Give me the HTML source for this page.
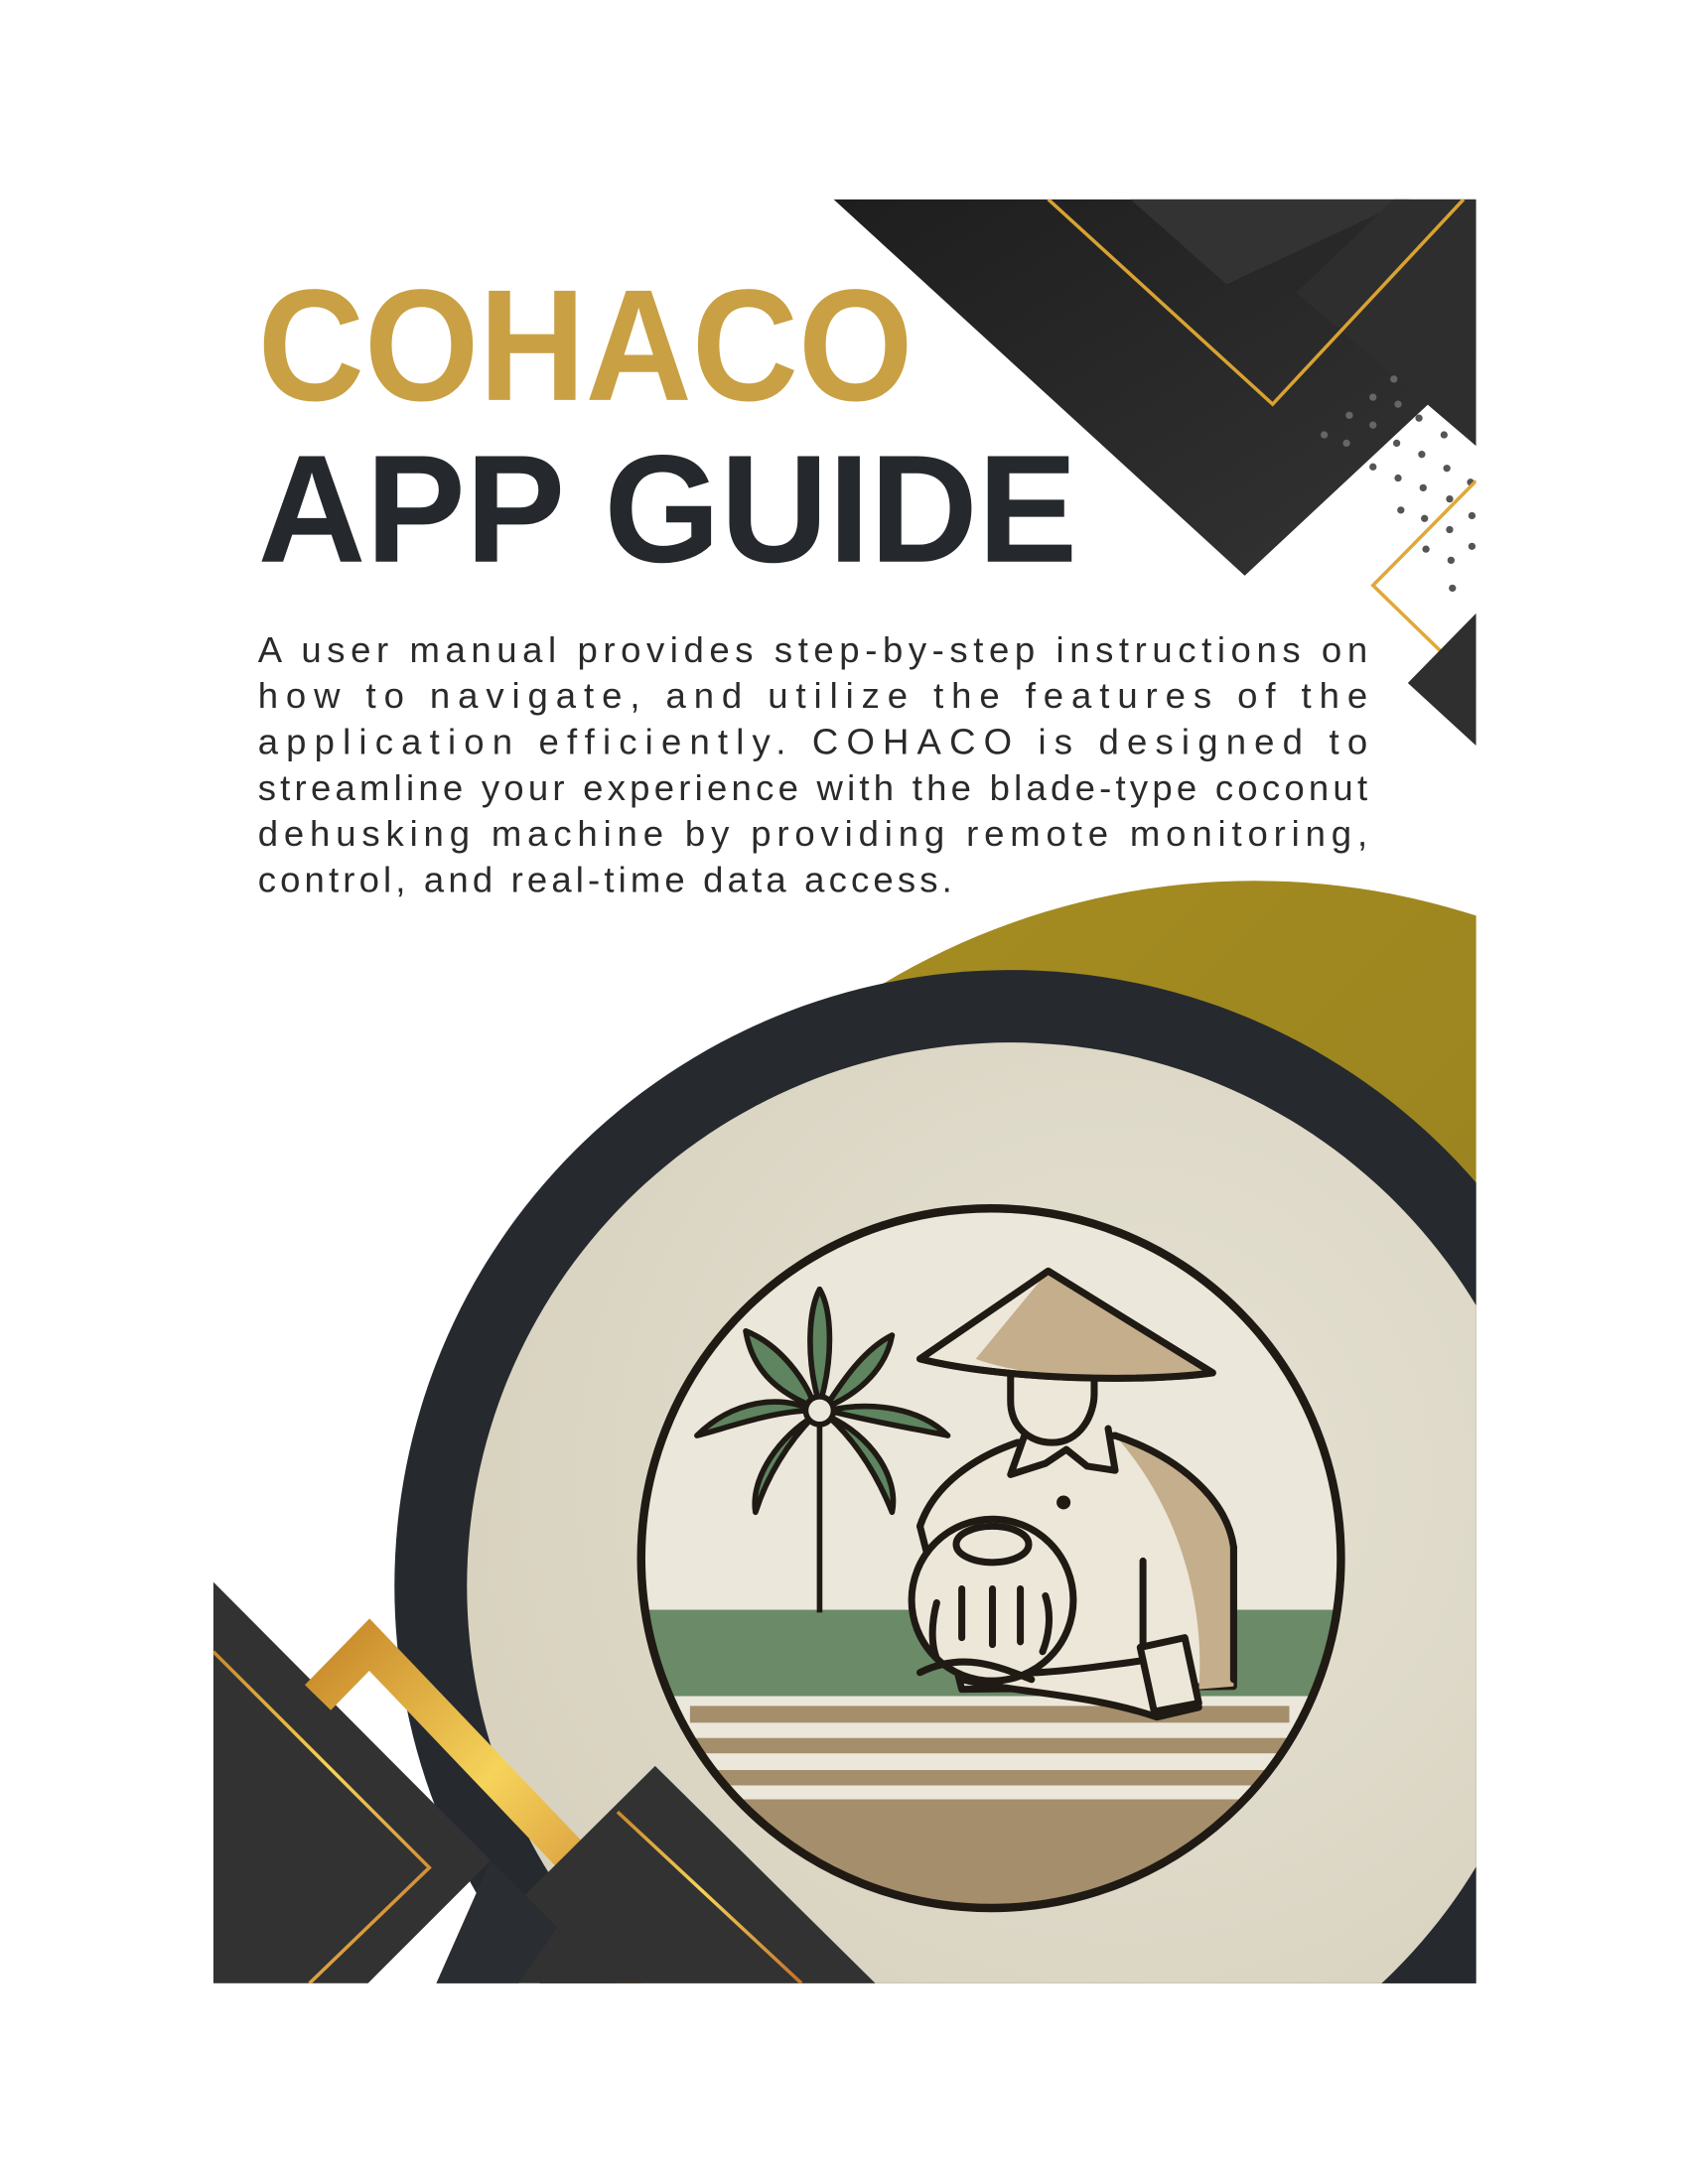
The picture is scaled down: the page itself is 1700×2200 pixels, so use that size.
<!DOCTYPE html>
<html><head><meta charset="utf-8"><style>
html,body{margin:0;padding:0;background:#fff;width:1700px;height:2200px;overflow:hidden;}
svg{display:block;}
</style></head><body>
<svg width="1700" height="2200" viewBox="0 0 1211 1567" preserveAspectRatio="none" xmlns="http://www.w3.org/2000/svg">
<defs>
<linearGradient id="dk" x1="0" y1="0" x2="1" y2="1"><stop offset="0" stop-color="#1e1e1f"/><stop offset="1" stop-color="#343434"/></linearGradient>
<linearGradient id="gl" x1="0" y1="0" x2="1" y2="1"><stop offset="0" stop-color="#c8892b"/><stop offset="0.45" stop-color="#f6d35a"/><stop offset="1" stop-color="#c3722a"/></linearGradient>
<linearGradient id="gd" x1="0" y1="0" x2="1" y2="1"><stop offset="0" stop-color="#a88f22"/><stop offset="1" stop-color="#8c771c"/></linearGradient>
<radialGradient id="bg" cx="0.6" cy="0.4" r="0.7"><stop offset="0" stop-color="#e6e2d4"/><stop offset="1" stop-color="#d6d0bc"/></radialGradient>
<clipPath id="box"><rect x="153" y="143" width="906" height="1280"/></clipPath>
<clipPath id="lc"><circle cx="711" cy="1118" r="250"/></clipPath>
</defs>

<g clip-path="url(#box)">
  <circle cx="900" cy="1150" r="518" fill="url(#gd)"/>
  <circle cx="725" cy="1138" r="442" fill="#262a2f"/>
  <circle cx="725" cy="1138" r="390" fill="url(#bg)"/>

  <polygon points="598,143 1059,143 1059,258 893,413" fill="url(#dk)"/>
  <polygon points="811,143 1011,143 880,204" fill="#333"/>
  <polygon points="930,210 1000,143 1059,143 1059,320" fill="#2e2e2e"/>
  <polyline points="752,143 913,290 1050,143" fill="none" stroke="#d9a232" stroke-width="2.5"/>
  <g fill="#666">
    <circle cx="1000" cy="272" r="2.6"/><circle cx="985" cy="285" r="2.6"/><circle cx="1003" cy="290" r="2.6"/>
    <circle cx="968" cy="298" r="2.6"/><circle cx="985" cy="305" r="2.6"/><circle cx="950" cy="312" r="2.6"/><circle cx="966" cy="318" r="2.6"/>
  </g>
  <g fill="#555">
    <circle cx="1018" cy="300" r="2.6"/><circle cx="1036" cy="312" r="2.6"/><circle cx="1002" cy="318" r="2.6"/><circle cx="1020" cy="326" r="2.6"/>
    <circle cx="1038" cy="336" r="2.6"/><circle cx="985" cy="335" r="2.6"/><circle cx="1003" cy="343" r="2.6"/><circle cx="1021" cy="350" r="2.6"/>
    <circle cx="1040" cy="358" r="2.6"/><circle cx="1055" cy="346" r="2.6"/><circle cx="1005" cy="366" r="2.6"/><circle cx="1022" cy="372" r="2.6"/>
    <circle cx="1040" cy="380" r="2.6"/><circle cx="1056" cy="370" r="2.6"/><circle cx="1023" cy="394" r="2.6"/><circle cx="1041" cy="402" r="2.6"/><circle cx="1056" cy="392" r="2.6"/><circle cx="1042" cy="422" r="2.6"/>
  </g>
  <polyline points="1059,345 985,420 1059,492" fill="none" stroke="#e0a838" stroke-width="2.5"/>
  <polygon points="1010,490 1059,440 1059,535" fill="#2f2f2f"/>

  <g clip-path="url(#lc)">
    <rect x="440" y="860" width="560" height="520" fill="#ebe7da"/>
    <rect x="440" y="1155" width="560" height="62" fill="#6a8a68"/>
    <rect x="440" y="1217" width="560" height="8" fill="#ebe7da"/>
    <rect x="495" y="1224" width="430" height="12" fill="#a48e6c"/>
    <rect x="495" y="1247" width="430" height="11" fill="#a48e6c"/>
    <rect x="495" y="1270" width="430" height="11" fill="#a48e6c"/>
    <rect x="440" y="1291" width="560" height="100" fill="#a48e6c"/>
  </g>
  <g stroke="#1f1a14" stroke-width="4" fill="#5e8460" stroke-linejoin="round">
    <line x1="588" y1="1010" x2="588" y2="1157"/>
    <path d="M588,1008 C578,975 580,940 588,925 C597,940 598,975 588,1008Z"/>
    <path d="M585,1010 C560,1000 540,985 535,955 C560,965 578,990 585,1010Z"/>
    <path d="M583,1012 C555,1012 520,1025 500,1030 C525,1005 560,1000 583,1012Z"/>
    <path d="M584,1016 C565,1035 550,1060 542,1085 C538,1060 560,1030 584,1016Z"/>
    <path d="M594,1016 C615,1035 630,1060 640,1085 C645,1060 625,1030 594,1016Z"/>
    <path d="M594,1012 C625,1005 660,1010 680,1030 C655,1025 625,1020 594,1012Z"/>
    <path d="M592,1010 C605,990 620,968 640,958 C635,985 612,1002 592,1010Z"/>
    <circle cx="588" cy="1012" r="10" fill="#ebe7da"/>
  </g>
  <g stroke="#1f1a14" stroke-width="5" stroke-linejoin="round" stroke-linecap="round">
    <path d="M660,1095 C670,1065 700,1045 730,1035 L800,1030 C845,1045 880,1075 885,1110 L885,1210 L690,1212 Z" fill="#ece7d9"/>
    <path d="M800,1030 C845,1045 880,1075 885,1110 L885,1210 L860,1212 C865,1150 845,1080 800,1030Z" fill="#c5ae8c" stroke="none"/>
    <path d="M660,1095 C670,1065 700,1045 730,1035 M800,1030 C845,1045 880,1075 885,1110 L885,1205" fill="none"/>
    <path d="M735,1030 L725,1058 L750,1050 L765,1040 L780,1052 L800,1055 L795,1025" fill="#ece7d9"/>
    <path d="M725,945 L725,1005 C725,1025 740,1035 755,1035 C775,1035 785,1015 785,1000 L785,945Z" fill="#ece7d9"/>
    <path d="M660,975 L752,912 L870,985 C820,992 720,990 660,975Z" fill="#ece7d9"/>
    <path d="M700,975 L752,912 L870,985 C820,992 740,990 700,975Z" fill="#c5ae8c" stroke="none"/>
    <path d="M660,975 L752,912 L870,985 C820,992 720,990 660,975Z" fill="none"/>
    <line x1="820" y1="1120" x2="820" y2="1180"/>
    <path d="M690,1195 C720,1205 760,1200 830,1190 L850,1188 L860,1225 L830,1232 C780,1215 730,1215 690,1205Z" fill="#ece7d9"/>
    <path d="M818,1182 L850,1175 L860,1222 L828,1228Z" fill="#ece7d9"/>
    <circle cx="712" cy="1148" r="58" fill="#ece7d9"/>
    <ellipse cx="712" cy="1108" rx="26" ry="13" fill="#ece7d9"/>
    <path d="M672,1150 C668,1165 668,1180 672,1190 M690,1140 L690,1175 M712,1140 L712,1180 M732,1140 L732,1178 M750,1145 C755,1160 752,1175 748,1185" fill="none"/>
    <path d="M660,1200 C690,1185 715,1195 740,1205" fill="none"/>
  </g>
  <circle cx="763" cy="1078" r="5" fill="#1f1a14"/>
  <circle cx="711" cy="1118" r="251" fill="none" stroke="#1f1a14" stroke-width="6"/>

  <polygon points="153,1135 352,1335 264,1423 153,1423" fill="#323232"/>
  <polyline points="153,1185 308,1340 222,1423" fill="none" stroke="url(#gl)" stroke-width="2.5"/>
  <polyline points="228,1218 265,1180 470,1395 442,1423" fill="none" stroke="url(#gl)" stroke-width="26"/>
  <polygon points="313,1423 470,1267 628,1423" fill="#323232"/>
  <polygon points="352,1335 400,1383 372,1423 313,1423" fill="#2a2d31"/>
  <polyline points="443,1300 575,1423" fill="none" stroke="url(#gl)" stroke-width="2.5"/>
</g>

<text x="185" y="287" font-family="Liberation Sans, sans-serif" font-weight="bold" font-size="114" fill="#c9a043" textLength="470" lengthAdjust="spacingAndGlyphs">COHACO</text>
<text x="185" y="403" font-family="Liberation Sans, sans-serif" font-weight="bold" font-size="110" fill="#25292e" textLength="588" lengthAdjust="spacingAndGlyphs">APP GUIDE</text>

<g font-family="Liberation Sans, sans-serif" font-size="26" fill="#2a2a2a">
<text x="185" y="475" textLength="796" lengthAdjust="spacing">A user manual provides step-by-step instructions on</text>
<text x="185" y="508" textLength="796" lengthAdjust="spacing">how to  navigate, and utilize the features of the</text>
<text x="185" y="541" textLength="796" lengthAdjust="spacing">application efficiently. COHACO is designed to</text>
<text x="185" y="574" textLength="796" lengthAdjust="spacing">streamline your experience with the blade-type coconut</text>
<text x="185" y="607" textLength="796" lengthAdjust="spacing">dehusking machine by providing remote monitoring,</text>
<text x="185" y="640" textLength="498" lengthAdjust="spacing">control, and real-time data access.</text>
</g>
</svg>
</body></html>
